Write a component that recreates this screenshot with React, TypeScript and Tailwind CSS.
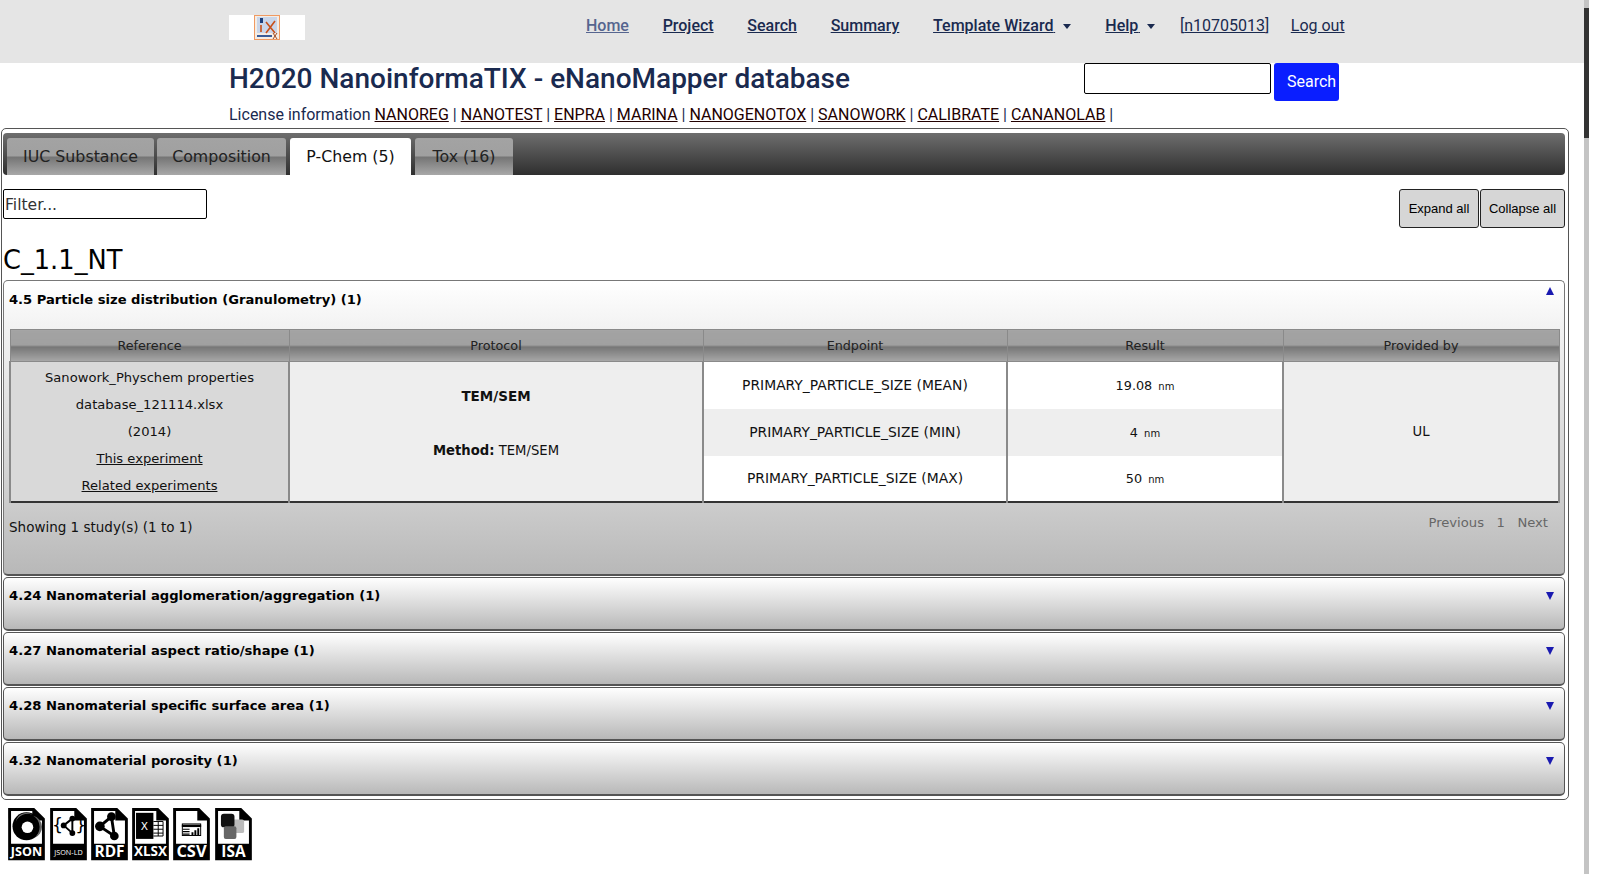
import React from "react";

const roboto = "font-['Roboto',sans-serif]";
const tabGrad = "bg-[linear-gradient(#a3a3a3_0%,#a0a0a0_48%,#757575_52%,#a8a8a8_100%)]";

function Caret() {
  return <span className="ml-[7.5px] h-0 w-0 shrink-0 border-x-[4.5px] border-t-[5px] border-x-transparent border-t-[#1a2a4f]" />;
}

function NavLink({ ml, muted, bold = true, children }: { ml: string; muted?: boolean; bold?: boolean; children: React.ReactNode }) {
  return (
    <span className={`${ml} shrink-0 whitespace-nowrap text-[16px] underline ${bold ? "font-medium" : "font-normal"} ${muted ? "text-[#56658f]" : "text-[#1a2a4f]"}`}>
      {children}
    </span>
  );
}

function Logo() {
  return (
    <div className="flex h-[25px] w-[76px] items-center justify-center bg-white">
      <svg width="26" height="25" viewBox="0 0 26 25">
        <rect x="0.5" y="0.5" width="25" height="24" fill="#f4ede6" stroke="#f09a62" />
        <rect x="3" y="2" width="20" height="16" fill="#c9d6ea" />
        <rect x="6" y="3" width="3" height="5" fill="#1c3f7c" />
        <path d="M7 10v7M12 7l9 11M21 6L12 18" stroke="#c8501a" strokeWidth="1.6" fill="none" />
        <rect x="3" y="20" width="15" height="2" fill="#3a5c98" />
        <path d="M19 24l4-6M19 18l4 6" stroke="#a04a20" strokeWidth="1" />
      </svg>
    </div>
  );
}

function Doc({ label, size, y = 50, weight = 700, children }: { label: string; size: number; y?: number; weight?: number; children: React.ReactNode }) {
  return (
    <svg width="37" height="56" viewBox="0 0 38 58" className="shrink-0">
      <path d="M0 0H27L38 11V54H0Z" fill="#000" />
      <path d="M3 3H25V13H35V37H3Z" fill="#fff" />
      {children}
      <text x="19" y={y} textAnchor="middle" fill="#fff" fontSize={size} fontWeight={weight} fontFamily="'Open Sans',sans-serif">{label}</text>
    </svg>
  );
}

function ExportIcons() {
  return (
    <div className="mt-[8px] flex gap-[4.3px] pl-[8.3px]">
      <Doc label="JSON" size={13}>
        <circle cx="19" cy="19" r="14.5" fill="#000" />
        <circle cx="20" cy="20" r="6" fill="#fff" />
        <path d="M8 14a13 13 0 0 1 17-7a11 11 0 0 0-17 7Z" fill="#777" />
        <path d="M26 8a14 14 0 0 1 1 23a12 12 0 0 0-1-23Z" fill="#666" />
      </Doc>
      <Doc label="JSON-LD" size={7.5} weight={400} y={49}>
        <text x="2" y="24" fontSize="18" fontFamily="'DejaVu Sans',sans-serif">{"{"}</text>
        <text x="26" y="24" fontSize="18" fontFamily="'DejaVu Sans',sans-serif">{"}"}</text>
        <path d="M14 18L23 11M14 18L23 26M23 11V26" stroke="#000" strokeWidth="2" />
        <circle cx="14" cy="18" r="3" /><circle cx="23" cy="11" r="3" /><circle cx="23" cy="26" r="3" />
      </Doc>
      <Doc label="RDF" size={16} y={51}>
        <path d="M9 19L21 9M9 19L24 29M21 9L24 29" stroke="#000" strokeWidth="3" fill="none" />
        <circle cx="9" cy="19" r="5" /><circle cx="21" cy="9" r="4.5" /><circle cx="24" cy="29" r="4.5" />
      </Doc>
      <Doc label="XLSX" size={14}>
        <rect x="4" y="5" width="18" height="27" fill="#000" />
        <text x="9" y="23" fontSize="11" fill="#fff" fontFamily="'DejaVu Sans',sans-serif">X</text>
        <path d="M22 14H32V29H22M22 18H32M22 22H32M22 26H32M27 14V29" stroke="#000" strokeWidth="1" fill="none" />
      </Doc>
      <Doc label="CSV" size={17} y={51}>
        <rect x="9.5" y="16.5" width="19" height="12" fill="none" stroke="#000" strokeWidth="1" />
        <path d="M9 18.5H29" stroke="#000" strokeWidth="2.5" />
        <path d="M10 22H17M10 24.5H17M10 27H17" stroke="#000" strokeWidth="1.2" />
        <path d="M20 28v-3M23 28v-5M26 28v-7" stroke="#000" strokeWidth="2" />
      </Doc>
      <Doc label="ISA" size={16} y={51}>
        <rect x="16" y="12" width="14" height="14" rx="2" fill="#bbb" />
        <rect x="6" y="6" width="14" height="14" rx="3" fill="#111" />
        <rect x="9" y="19" width="13" height="13" rx="2" fill="#666" />
      </Doc>
    </div>
  );
}

const licences = ["NANOREG", "NANOTEST", "ENPRA", "MARINA", "NANOGENOTOX", "SANOWORK", "CALIBRATE", "CANANOLAB"];

function Tab({ w, ml, active, children }: { w: string; ml: string; active?: boolean; children: React.ReactNode }) {
  return (
    <div className={`${w} ${ml} flex h-[37px] items-center justify-center rounded-t-[3px] text-[15.8px] ${active ? "bg-white text-[#111]" : `${tabGrad} text-[#222]`}`}>
      {children}
    </div>
  );
}

function ClosedItem({ title }: { title: string }) {
  return (
    <div className="mt-px flex h-[54.1px] justify-between rounded-[5px] border border-b-2 border-[#555] bg-[linear-gradient(#ffffff,#b8b8b8)] pl-[5px] pr-[10px] pt-[10.5px]">
      <span className="text-[13.15px] font-bold leading-[16px] text-black">{title}</span>
      <span className="mt-[4px] h-0 w-0 border-x-[4.5px] border-t-[8px] border-x-transparent border-t-[#1a1ab0]" />
    </div>
  );
}

const thCls = `border border-[#8a8a8a] ${tabGrad} text-center text-[12.75px] font-normal text-[#222]`;
const tdCls = "border-x-2 border-[#8a8a8a] text-center text-[#111]";

function ResultCell({ v }: { v: string }) {
  return (
    <span className="text-[12.8px]">
      {v} <span className="ml-[2px] text-[10px]">nm</span>
    </span>
  );
}

export default function App() {
  return (
    <div className="flex h-[874px] w-[1600px] overflow-hidden bg-white font-['DejaVu_Sans',sans-serif]">
      <div className="w-[1584px] shrink-0">
        <header className={`flex h-[63px] items-start bg-[#e5e5e5] pl-[229px] pt-[15px] ${roboto}`}>
          <Logo />
          <nav className="flex h-[22px] items-center">
            <NavLink ml="ml-[281px]" muted>Home</NavLink>
            <NavLink ml="ml-[33.7px]">Project</NavLink>
            <NavLink ml="ml-[33.7px]">Search</NavLink>
            <NavLink ml="ml-[33.7px]">Summary</NavLink>
            <NavLink ml="ml-[33.7px]">Template Wizard{"\u200a"}</NavLink>
            <Caret />
            <NavLink ml="ml-[34.7px]">Help{"\u200a"}</NavLink>
            <Caret />
            <span className="ml-[24.5px] whitespace-nowrap text-[16px] text-[#1a2a4f]">[<span className="underline">n10705013</span>]</span>
            <NavLink ml="ml-[21.5px]" bold={false}>Log out</NavLink>
          </nav>
        </header>

        <div className={`flex h-[38px] items-start pl-[229px] ${roboto}`}>
          <h1 className="w-[855px] shrink-0 text-[28px] font-medium leading-[32px] text-[#1a2a4f]">H2020 NanoinformaTIX - eNanoMapper database</h1>
          <input aria-label="Search" className="h-[31px] w-[187px] rounded-[2px] border border-black bg-white" />
          <button className="ml-[3px] h-[38px] w-[65px] rounded-[3px] bg-[#0a1eff] pl-[13px] text-left text-[16px] text-white">Search</button>
        </div>

        <div className={`flex h-[27px] items-start pl-[229px] pt-[4px] text-[16px] leading-[20px] text-[#1a2a4f] ${roboto}`}>
          <span className="whitespace-pre">License information </span>
          {licences.map((l) => (
            <span key={l} className="whitespace-pre">
              <span className="text-[#200] underline">{l}</span> |{" "}
            </span>
          ))}
        </div>

        <main className="ml-px h-[671.5px] w-[1568px] rounded-[5px] border border-[#555] pb-px pl-px pr-[3px] pt-[4px]">
          <div className="flex h-[42px] items-end rounded-[4px] bg-[linear-gradient(#6e6e6e,#2f2f2f)] pl-[4px]">
            <Tab w="w-[147px]" ml="ml-0">IUC Substance</Tab>
            <Tab w="w-[129px]" ml="ml-[3px]">Composition</Tab>
            <Tab w="w-[121px]" ml="ml-[4px]" active>P-Chem (5)</Tab>
            <Tab w="w-[98px]" ml="ml-[4px]">Tox (16)</Tab>
          </div>

          <div className="mt-[14px] flex items-start justify-between">
            <input placeholder="Filter..." className="h-[30px] w-[204px] rounded-[2px] border border-black bg-white px-px pt-[2px] text-[15.6px] placeholder:text-[#333]" />
            <div className="flex font-['Liberation_Sans',sans-serif]">
              <button className="h-[39px] w-[80px] rounded-[3px] border border-[#222] bg-[#d6d6d6] text-[13px] text-black">Expand all</button>
              <button className="ml-px h-[39px] w-[85px] rounded-[3px] border border-[#222] bg-[#d6d6d6] text-[13px] text-black">Collapse all</button>
            </div>
          </div>

          <h2 className="mt-[15px] h-[37px] text-[25.7px] leading-[34px] text-black">C_1.1_NT</h2>

          <section className="h-[295.5px] rounded-[5px] border border-b-2 border-[#777] border-b-[#555] bg-[linear-gradient(#ffffff_0%,#f3f3f3_15%,#cdcdcd_75%,#b8b8b8_100%)] px-[6px] pt-[11px]">
            <div className="flex justify-between pr-[4px]">
              <span className="-ml-px text-[13.1px] font-bold leading-[16px] text-black">4.5 Particle size distribution (Granulometry) (1)</span>
              <span className="-mt-[5px] h-0 w-0 border-x-[4.5px] border-b-[8px] border-x-transparent border-b-[#1a1ab0]" />
            </div>
            <table className="-ml-px mt-[21px] w-[1551px] table-fixed border-collapse">
              <thead>
                <tr className="h-[32px]">
                  <th className={`${thCls} w-[279px]`}>Reference</th>
                  <th className={`${thCls} w-[414px]`}>Protocol</th>
                  <th className={`${thCls} w-[304px]`}>Endpoint</th>
                  <th className={`${thCls} w-[276px]`}>Result</th>
                  <th className={thCls}>Provided by</th>
                </tr>
              </thead>
              <tbody className="border-b-2 border-[#333]">
                <tr className="h-[47px]">
                  <td rowSpan={3} className={`${tdCls} bg-[#d9d9d9] text-[13.1px] leading-[27px]`}>
                    Sanowork_Physchem properties<br />database_121114.xlsx<br />(2014)<br />
                    <span className="underline">This experiment</span><br />
                    <span className="underline">Related experiments</span>
                  </td>
                  <td rowSpan={3} className={`${tdCls} bg-[#eeeeee] pt-[24px] align-top text-[13.2px] leading-[20px]`}>
                    <b className="text-[13.5px]">TEM/SEM</b>
                    <div className="mt-[34px]"><b>Method:</b> TEM/SEM</div>
                  </td>
                  <td className={`${tdCls} bg-white text-[13.87px]`}>PRIMARY_PARTICLE_SIZE (MEAN)</td>
                  <td className={`${tdCls} bg-white`}><ResultCell v="19.08" /></td>
                  <td rowSpan={3} className={`${tdCls} bg-[#eeeeee] text-[13.2px]`}>UL</td>
                </tr>
                <tr className="h-[47px]">
                  <td className={`${tdCls} bg-[#eeeeee] text-[13.87px]`}>PRIMARY_PARTICLE_SIZE (MIN)</td>
                  <td className={`${tdCls} bg-[#eeeeee]`}><ResultCell v="4" /></td>
                </tr>
                <tr className="h-[46.5px]">
                  <td className={`${tdCls} bg-white text-[13.87px]`}>PRIMARY_PARTICLE_SIZE (MAX)</td>
                  <td className={`${tdCls} bg-white`}><ResultCell v="50" /></td>
                </tr>
              </tbody>
            </table>
            <div className="flex items-start justify-between pr-[10px] pt-[10px] text-[13.15px]">
              <span className="-ml-px mt-[4px] text-[13.5px] text-[#111]">Showing 1 study(s) (1 to 1)</span>
              <div className="flex gap-[12.5px] text-[#666]">
                <span>Previous</span><span>1</span><span>Next</span>
              </div>
            </div>
          </section>

          <ClosedItem title="4.24 Nanomaterial agglomeration/aggregation (1)" />
          <ClosedItem title="4.27 Nanomaterial aspect ratio/shape (1)" />
          <ClosedItem title="4.28 Nanomaterial specific surface area (1)" />
          <ClosedItem title="4.32 Nanomaterial porosity (1)" />
        </main>

        <ExportIcons />
      </div>
      <div className="h-[874px] w-[5px] shrink-0 bg-[#c4c4c4]">
        <div className="mt-[8px] h-[130px] bg-[#333]" />
      </div>
    </div>
  );
}
